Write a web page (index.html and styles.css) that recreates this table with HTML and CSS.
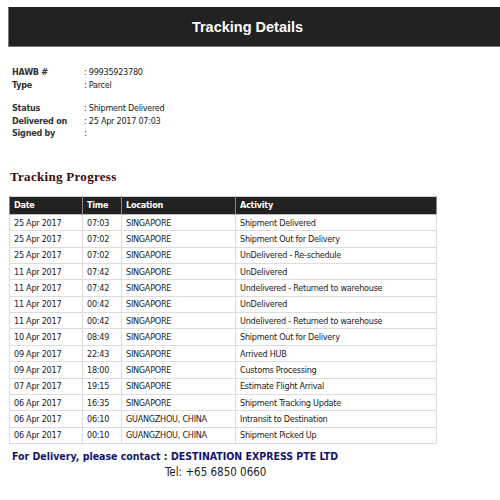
FILE: index.html
```html
<!DOCTYPE html>
<html>
<head>
<meta charset="utf-8">
<link rel="stylesheet" href="styles.css">
</head>
<body>
<div class="bar"><span class="bar-title">Tracking Details</span></div>
<div class="info">
  <div class="group">
    <div class="row"><span class="lbl">HAWB #</span><span class="val">: 99935923780</span></div>
    <div class="row"><span class="lbl">Type</span><span class="val">: Parcel</span></div>
  </div>
  <div class="group">
    <div class="row"><span class="lbl">Status</span><span class="val">: Shipment Delivered</span></div>
    <div class="row"><span class="lbl">Delivered on</span><span class="val">: 25 Apr 2017 07:03</span></div>
    <div class="row"><span class="lbl">Signed by</span><span class="val">:</span></div>
  </div>
</div>
<h2 class="progress">Tracking Progress</h2>
<table class="track">
  <thead>
    <tr><th class="c-date">Date</th><th class="c-time">Time</th><th class="c-loc">Location</th><th class="c-act">Activity</th></tr>
  </thead>
  <tbody>
    <tr><td>25 Apr 2017</td><td>07:03</td><td>SINGAPORE</td><td>Shipment Delivered</td></tr>
    <tr><td>25 Apr 2017</td><td>07:02</td><td>SINGAPORE</td><td>Shipment Out for Delivery</td></tr>
    <tr><td>25 Apr 2017</td><td>07:02</td><td>SINGAPORE</td><td>UnDelivered - Re-schedule</td></tr>
    <tr><td>11 Apr 2017</td><td>07:42</td><td>SINGAPORE</td><td>UnDelivered</td></tr>
    <tr><td>11 Apr 2017</td><td>07:42</td><td>SINGAPORE</td><td>Undelivered - Returned to warehouse</td></tr>
    <tr><td>11 Apr 2017</td><td>00:42</td><td>SINGAPORE</td><td>UnDelivered</td></tr>
    <tr><td>11 Apr 2017</td><td>00:42</td><td>SINGAPORE</td><td>Undelivered - Returned to warehouse</td></tr>
    <tr><td>10 Apr 2017</td><td>08:49</td><td>SINGAPORE</td><td>Shipment Out for Delivery</td></tr>
    <tr><td>09 Apr 2017</td><td>22:43</td><td>SINGAPORE</td><td>Arrived HUB</td></tr>
    <tr><td>09 Apr 2017</td><td>18:00</td><td>SINGAPORE</td><td>Customs Processing</td></tr>
    <tr><td>07 Apr 2017</td><td>19:15</td><td>SINGAPORE</td><td>Estimate Flight Arrival</td></tr>
    <tr><td>06 Apr 2017</td><td>16:35</td><td>SINGAPORE</td><td>Shipment Tracking Update</td></tr>
    <tr><td>06 Apr 2017</td><td>06:10</td><td>GUANGZHOU, CHINA</td><td>Intransit to Destination</td></tr>
    <tr><td>06 Apr 2017</td><td>00:10</td><td>GUANGZHOU, CHINA</td><td>Shipment Picked Up</td></tr>
  </tbody>
</table>
<div class="contact">For Delivery, please contact : DESTINATION EXPRESS PTE LTD</div>
<div class="tel">Tel: +65 6850 0660</div>
</body>
</html>
```
FILE: styles.css
```css
html, body { background: #fff; }
body {
  margin: 7px 0 0 8px;
  font-family: "DejaVu Sans Condensed", "DejaVu Sans", sans-serif;
  font-stretch: condensed;
  font-size: 9px;
  letter-spacing: -0.25px;
  color: #222;
}
.bar {
  height: 39px;
  background: #222;
  border-left: 1px solid #777;
  border-bottom: 1px solid #777;
  display: flex;
  align-items: center;
  justify-content: center;
  padding-right: 12px;
}
.bar-title {
  font-family: "Liberation Sans", Arial, sans-serif;
  font-stretch: normal;
  letter-spacing: 0;
  font-weight: bold;
  font-size: 14.5px;
  color: #fff;
  margin-left: -2px;
}
.info { padding: 19px 0 0 4px; }
.group { margin-bottom: 11px; }
.row { display: flex; height: 12.6px; line-height: 12.6px; }
.lbl { width: 72px; font-weight: bold; color: #333; }
.val { color: #222; }
.progress {
  margin: 30px 0 0 2px;
  font-family: "Liberation Serif", "Times New Roman", serif;
  font-stretch: normal;
  font-size: 13px;
  letter-spacing: 0.3px;
  font-weight: bold;
  color: #3a0c0c;
  line-height: 14px;
}
.track {
  margin-top: 12px;
  margin-left: 1px;
  border-collapse: collapse;
  width: 428px;
  border: 1px solid #d8d8d8;
}
.track th {
  background: #222;
  color: #fff;
  font-weight: bold;
  text-align: left;
  height: 17px;
  padding: 0 4px;
  border-left: 1px solid #888;
  border-right: 1px solid #888;
  border-bottom: 1px solid #bbb;
}
.c-date { width: 64px; }
.c-time { width: 30px; }
.c-loc { width: 105px; }
.track td {
  height: 15.36px;
  padding: 0 4px;
  border: 1px solid #ddd;
  color: #222;
}
.contact {
  margin: 5px 0 0 4px;
  font-weight: bold;
  font-size: 10.5px;
  letter-spacing: 0;
  color: #14146e;
  line-height: 15px;
}
.tel {
  margin-top: 1px;
  padding-left: 157px;
  font-size: 11.5px;
  letter-spacing: 0;
  color: #222;
}
```
